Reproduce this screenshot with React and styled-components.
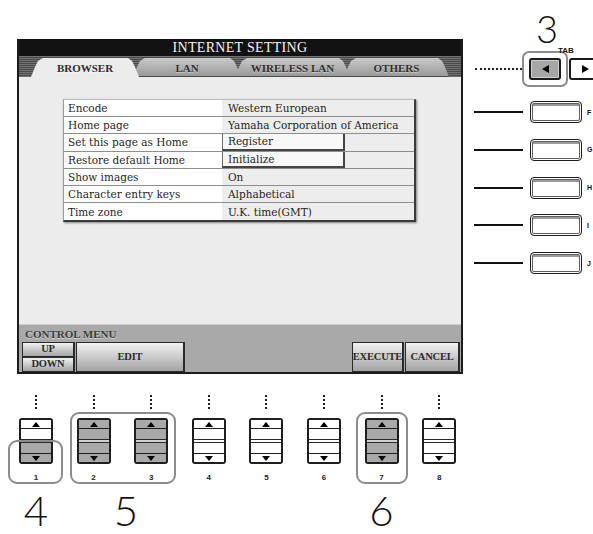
import React from 'react';
import styled, { createGlobalStyle } from 'styled-components';

const GlobalStyle = createGlobalStyle`
  html, body { margin: 0; padding: 0; background: #fff; overflow: hidden; }
  body { font-family: "Liberation Sans", Arial, sans-serif; }
`;

const Page = styled.div`
  width: 593px;
  display: flex;
  flex-direction: column;
`;

const TopArea = styled.div`
  display: flex;
  align-items: flex-start;
`;

const ScreenWrap = styled.div`
  padding: 39px 0 0 17px;
`;

const Panel = styled.div`
  width: 446px;
  height: 335px;
  box-sizing: border-box;
  border-left: 2px solid #1c1c1c;
  border-right: 2px solid #1c1c1c;
  border-bottom: 2px solid #1c1c1c;
  display: flex;
  flex-direction: column;
  background: #ececec;
`;

const TitleBar = styled.div`
  height: 17px;
  background: #121212;
  color: #f4f4f4;
  text-align: center;
  font: 14px/17px "Liberation Serif", "Times New Roman", serif;
  letter-spacing: 0.3px;
`;

const TabStrip = styled.div`
  height: 21px;
  display: flex;
  align-items: flex-end;
  padding-left: 12px;
  background: repeating-linear-gradient(to bottom, #737373 0 1px, #4a4a4a 1px 2px);
`;

const Tab = styled.div`
  position: relative;
  height: 19px;
  width: ${(p) => p.$w}px;
  margin-left: ${(p) => (p.$first ? 0 : -6)}px;
  z-index: ${(p) => (p.$active ? 2 : 1)};
  clip-path: polygon(0 100%, 4px 9px, 7px 3px, 12px 0, calc(100% - 11px) 0, calc(100% - 7px) 3px, calc(100% - 4px) 9px, 100% 100%);
  background: ${(p) => (p.$active ? '#ececec' : 'linear-gradient(#c9c9c9, #979797)')};
  box-shadow: ${(p) => (p.$active ? 'none' : 'inset 0 -1px #4a4a4a')};
  font: bold 11px/19px "Liberation Serif", "Times New Roman", serif;
  color: #2e2e2e;
  text-shadow: 0 1px 0 rgba(255, 255, 255, 0.45);
  text-align: center;
  padding-top: 1px;
  box-sizing: border-box;
`;

const Content = styled.div`
  flex: 1;
  padding: 22px 0 0 44px;
`;

const Table = styled.div`
  width: 353px;
  box-sizing: border-box;
  border-left: 1px solid #9a9a9a;
  border-top: 1px solid #bdbdbd;
  border-right: 2px solid #3a3a3a;
  border-bottom: 2px solid #3a3a3a;
  box-shadow: 1px 1px 2px rgba(0, 0, 0, 0.45);
  display: grid;
  grid-template-columns: 158px 1fr;
`;

const Cell = styled.div`
  height: 17.2px;
  box-sizing: border-box;
  border-bottom: ${(p) => (p.$last ? 'none' : '1px solid #8e8e8e')};
  background: ${(p) => (p.$value ? '#ededed' : '#fff')};
  font: 10.5px/16px "DejaVu Serif", "Liberation Serif", serif;
  color: #1f1f1f;
  padding-left: ${(p) => (p.$button ? 0 : p.$value ? 6 : 4)}px;
  display: flex;
  align-items: center;
  white-space: nowrap;
`;

const CellButton = styled.div`
  width: 123px;
  height: 100%;
  box-sizing: border-box;
  background: #f8f8f8;
  border-left: 1px solid #6a6a6a;
  border-right: 2px solid #454545;
  border-bottom: 2px solid #454545;
  padding-left: 5px;
  display: flex;
  align-items: center;
`;

const ControlArea = styled.div`
  height: 48px;
  background: #a9a9a9;
  border-top: 1px solid #cfcfcf;
  box-sizing: border-box;
  display: flex;
  flex-direction: column;
`;

const ControlLabel = styled.div`
  height: 17px;
  box-sizing: border-box;
  padding: 4px 0 0 6px;
  font: bold 11px/10px "Liberation Serif", "Times New Roman", serif;
  color: #3a3a3a;
  text-shadow: 0 1px 0 #d8d8d8;
`;

const ButtonRow = styled.div`
  height: 30px;
  display: flex;
  padding: 0 1px 0 3px;
`;

const Stack = styled.div`
  display: flex;
  flex-direction: column;
`;

const MenuButton = styled.div`
  width: ${(p) => p.$w}px;
  height: ${(p) => p.$h || 30}px;
  margin-left: ${(p) => p.$ml || 0}px;
  box-sizing: border-box;
  border: 1px solid #2a2a2a;
  border-right-width: 2px;
  background: linear-gradient(#f2f2f2, #a3a3a3);
  display: flex;
  align-items: center;
  justify-content: center;
  font: bold 10.5px/1 "Liberation Serif", "Times New Roman", serif;
  color: #2b2b2b;
  letter-spacing: -0.2px;
`;

const Spacer = styled.div`
  flex: 1;
`;

/* Right column */
const RightCol = styled.div`
  width: 130px;
  display: flex;
  flex-direction: column;
  align-items: flex-start;
`;

const BigNum = styled.div`
  font: 300 ${(p) => p.$size || 42}px/0.9 Lato, "DejaVu Sans", sans-serif;
  color: #111;
  margin-left: ${(p) => p.$ml || 0}px;
  margin-top: ${(p) => p.$mt || 0}px;
`;

const TabLabel = styled.div`
  margin-left: 95px;
  margin-top: 2px;
  font: bold 8px/8px "Liberation Sans", Arial, sans-serif;
  color: #111;
  position: relative;
  z-index: 1;
`;

const TabRow = styled.div`
  display: flex;
  align-items: center;
  margin-top: -4px;
`;

const DottedLine = styled.div`
  width: 47px;
  margin-left: 12px;
  border-top: 2px dotted #222;
`;

const HighlightRing = styled.div`
  border: 2px solid #8c8c8c;
  border-radius: 7px;
  padding: 5px 5px;
`;

const TabButton = styled.div`
  width: 32px;
  height: 22px;
  box-sizing: border-box;
  border: 2px solid #1c1c1c;
  border-radius: 3px;
  background: ${(p) => (p.$on ? '#a6a6a6' : '#fff')};
  box-shadow: inset 0 0 0 1px ${(p) => (p.$on ? '#cfcfcf' : '#fff')};
  margin-left: ${(p) => p.$ml || 0}px;
  display: flex;
  align-items: center;
  justify-content: center;
  flex: none;
`;

const Arrow = styled.div`
  width: 0;
  height: 0;
  border-top: 4px solid transparent;
  border-bottom: 4px solid transparent;
  ${(p) => (p.$dir === 'left' ? 'border-right: 7px solid #000;' : 'border-left: 7px solid #000;')}
`;

const SideList = styled.div`
  display: flex;
  flex-direction: column;
  gap: 15.75px;
  margin-top: 14px;
`;

const SideRow = styled.div`
  display: flex;
  align-items: center;
  height: 22px;
`;

const SideLine = styled.div`
  width: 49px;
  height: 2px;
  background: #111;
  margin-left: 11px;
`;

const SideButton = styled.div`
  width: 52px;
  height: 22px;
  margin-left: 7px;
  box-sizing: border-box;
  border: 1px solid #1e1e1e;
  border-radius: 4px;
  background: #fff;
  box-shadow: inset 0 0 0 1px #fff, inset 0 0 0 2px #5e5e5e, inset 0 2px 0 2px #9a9a9a;
`;

const SideLetter = styled.div`
  margin-left: 5px;
  font: bold 7px/1 "Liberation Sans", Arial, sans-serif;
  color: #111;
`;

/* Sliders */
const SliderArea = styled.div`
  margin-top: 21px;
  padding-left: 7.2px;
`;

const SliderGrid = styled.div`
  display: grid;
  grid-template-columns: repeat(8, 57.6px);
`;

const Ringed = styled.div`
  position: relative;
  grid-column: span ${(p) => p.$span || 1};
  display: grid;
  grid-template-columns: repeat(${(p) => p.$span || 1}, 57.6px);
  &::after {
    content: '';
    position: absolute;
    top: ${(p) => p.$t}px;
    left: ${(p) => p.$l}px;
    right: ${(p) => p.$r}px;
    bottom: ${(p) => p.$b}px;
    border: 2.5px solid #8c8c8c;
    border-radius: 9px;
    pointer-events: none;
  }
`;

const SliderCell = styled.div`
  display: flex;
  flex-direction: column;
  align-items: center;
  height: 88px;
`;

const Dots = styled.div`
  height: 14px;
  border-left: 2px dotted #1e1e1e;
`;

const Fader = styled.div`
  margin-top: 9px;
  width: 34px;
  height: 46px;
  box-sizing: border-box;
  border: 2px solid #1e1e1e;
  border-radius: 3px;
  display: flex;
  flex-direction: column;
  overflow: hidden;
`;

const Cap = styled.div`
  height: 8px;
  flex: none;
  display: flex;
  align-items: center;
  justify-content: center;
  background: ${(p) => (p.$grey ? '#a9a9a9' : '#fff')};
  ${(p) => (p.$down ? 'border-top: 1px solid #1e1e1e;' : 'border-bottom: 1px solid #1e1e1e;')}
`;

const Half = styled.div`
  flex: 1;
  background: ${(p) => (p.$grey ? '#a9a9a9' : '#fff')};
`;

const MidLine = styled.div`
  height: 4px;
  flex: none;
  box-sizing: border-box;
  border-top: 1px solid #2a2a2a;
  border-bottom: 1px solid #2a2a2a;
  background: ${(p) => (p.$grey ? '#d0d0d0' : '#fff')};
`;

const Tri = styled.div`
  width: 0;
  height: 0;
  border-left: 4px solid transparent;
  border-right: 4px solid transparent;
  ${(p) => (p.$down ? 'border-top: 5px solid #000;' : 'border-bottom: 5px solid #000;')}
`;

const SliderNum = styled.div`
  margin-top: 9px;
  font: bold 8px/10px "Liberation Sans", Arial, sans-serif;
  color: #222;
`;

const NumeralGrid = styled.div`
  display: grid;
  grid-template-columns: repeat(8, 57.6px);
  margin-top: 9px;
`;

const Numeral = styled(BigNum)`
  grid-column: ${(p) => p.$col};
  justify-self: center;
  padding-left: ${(p) => p.$pl || 0}px;
`;

const Slider = ({ n, mode }) => {
  const topGrey = mode === 'full';
  const bottomGrey = mode === 'full' || mode === 'half';
  return (
    <SliderCell>
      <Dots />
      <Fader>
        <Cap $grey={topGrey}><Tri /></Cap>
        <Half $grey={topGrey} />
        <MidLine $grey={bottomGrey} />
        <Half $grey={bottomGrey} />
        <Cap $grey={bottomGrey} $down><Tri $down /></Cap>
      </Fader>
      <SliderNum>{n}</SliderNum>
    </SliderCell>
  );
};

const rows = [
  ['Encode', 'Western European'],
  ['Home page', 'Yamaha Corporation of America'],
  ['Set this page as Home', 'Register', true],
  ['Restore default Home', 'Initialize', true],
  ['Show images', 'On'],
  ['Character entry keys', 'Alphabetical'],
  ['Time zone', 'U.K. time(GMT)'],
];

const tabs = [
  { label: 'BROWSER', w: 108, active: true },
  { label: 'LAN', w: 108 },
  { label: 'WIRELESS LAN', w: 115 },
  { label: 'OTHERS', w: 105 },
];

export default function App() {
  return (
    <Page>
      <GlobalStyle />
      <TopArea>
        <ScreenWrap>
          <Panel>
            <TitleBar>INTERNET SETTING</TitleBar>
            <TabStrip>
              {tabs.map((t, i) => (
                <Tab key={t.label} $w={t.w} $first={i === 0} $active={t.active}>
                  {t.label}
                </Tab>
              ))}
            </TabStrip>
            <Content>
              <Table>
                {rows.map(([k, v, btn], i) => (
                  <React.Fragment key={k}>
                    <Cell $last={i === rows.length - 1}>{k}</Cell>
                    <Cell $value $button={btn} $last={i === rows.length - 1}>
                      {btn ? <CellButton>{v}</CellButton> : v}
                    </Cell>
                  </React.Fragment>
                ))}
              </Table>
            </Content>
            <ControlArea>
              <ControlLabel>CONTROL MENU</ControlLabel>
              <ButtonRow>
                <Stack>
                  <MenuButton $w={53} $h={15}>UP</MenuButton>
                  <MenuButton $w={53} $h={15}>DOWN</MenuButton>
                </Stack>
                <MenuButton $w={109} $ml={1}>EDIT</MenuButton>
                <Spacer />
                <MenuButton $w={52}>EXECUTE</MenuButton>
                <MenuButton $w={55} $ml={1}>CANCEL</MenuButton>
              </ButtonRow>
            </ControlArea>
          </Panel>
        </ScreenWrap>
        <RightCol>
          <BigNum $size={38} $ml={73} $mt={11}>3</BigNum>
          <TabLabel>TAB</TabLabel>
          <TabRow>
            <DottedLine />
            <HighlightRing>
              <TabButton $on><Arrow $dir="left" /></TabButton>
            </HighlightRing>
            <TabButton $ml={1}><Arrow $dir="right" /></TabButton>
          </TabRow>
          <SideList>
            {['F', 'G', 'H', 'I', 'J'].map((l) => (
              <SideRow key={l}>
                <SideLine />
                <SideButton />
                <SideLetter>{l}</SideLetter>
              </SideRow>
            ))}
          </SideList>
        </RightCol>
      </TopArea>
      <SliderArea>
        <SliderGrid>
          <Ringed $t={45} $l={1} $r={2} $b={-1}>
            <Slider n={1} mode="half" />
          </Ringed>
          <Ringed $span={2} $t={17} $l={5} $r={4} $b={-1}>
            <Slider n={2} mode="full" />
            <Slider n={3} mode="full" />
          </Ringed>
          <Slider n={4} />
          <Slider n={5} />
          <Slider n={6} />
          <Ringed $t={17} $l={3} $r={2} $b={-1}>
            <Slider n={7} mode="full" />
          </Ringed>
          <Slider n={8} />
        </SliderGrid>
        <NumeralGrid>
          <Numeral $col="1">4</Numeral>
          <Numeral $col="2 / span 2" $pl={7}>5</Numeral>
          <Numeral $col="7">6</Numeral>
        </NumeralGrid>
      </SliderArea>
    </Page>
  );
}
